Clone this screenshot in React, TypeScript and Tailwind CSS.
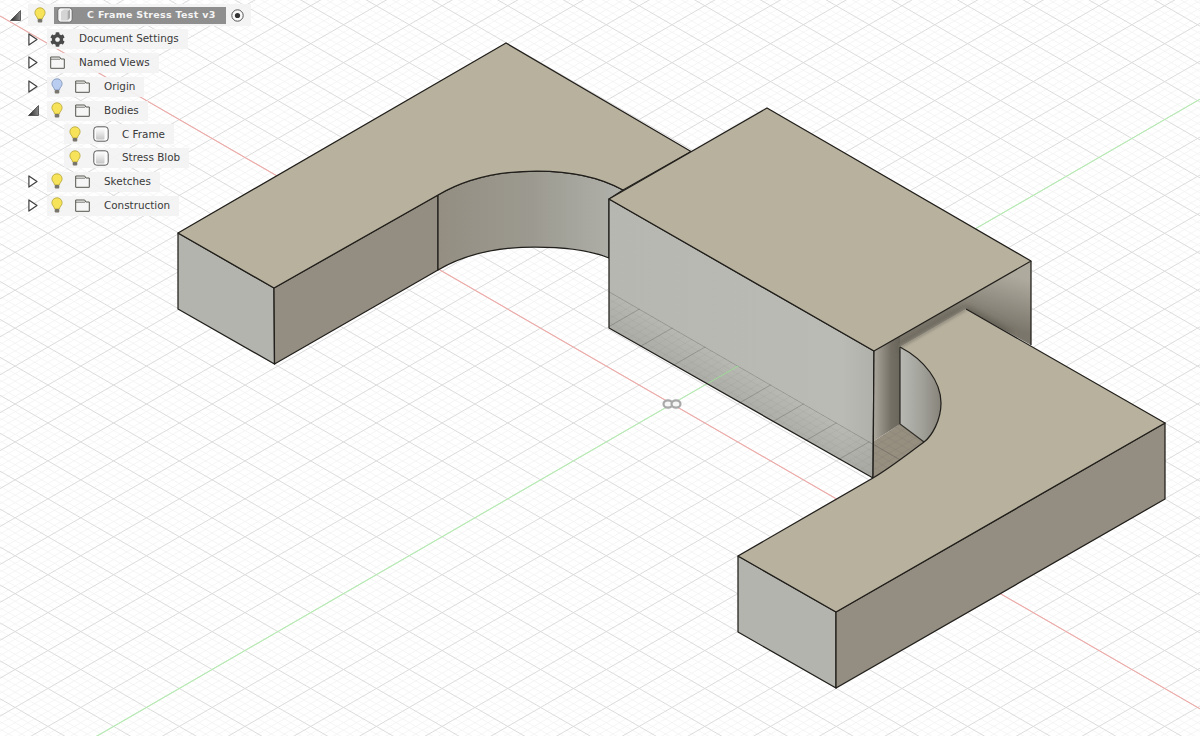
import React from 'react';
import { FaCog } from 'react-icons/fa';

const OX = 672;
const OY = 404;
const SLOPE = 0.5774;
const STEP = 37.93 / 5;

// iso grid lines, every fifth one is a major line
const GRID: { y0: number; y1: number; major: boolean }[] = [];
for (let k = -200; k <= 200; k++) {
  const major = k % 5 === 0;
  const a = OY - SLOPE * OX + k * STEP;
  GRID.push({ y0: a, y1: a + SLOPE * 1200, major });
  const b = OY + SLOPE * OX + k * STEP;
  GRID.push({ y0: b, y1: b - SLOPE * 1200, major });
}

const redLine = { y0: OY - SLOPE * OX, y1: OY - SLOPE * OX + SLOPE * 1200 };
const greenLine = { y0: OY + SLOPE * OX, y1: OY + SLOPE * OX - SLOPE * 1200 };

const EDGE = '#211f1b';
const EDGE_W = 1.25;

const GridLines = ({ minor, major }: { minor: string; major: string }) => (
  <>
    {GRID.filter(l => !l.major).map((l, i) => (
      <line key={i} x1={0} y1={l.y0} x2={1200} y2={l.y1} stroke={minor} strokeWidth={0.8} />
    ))}
    {GRID.filter(l => l.major).map((l, i) => (
      <line key={i} x1={0} y1={l.y0} x2={1200} y2={l.y1} stroke={major} strokeWidth={1} />
    ))}
  </>
);

const Viewport = () => (
  <svg className="absolute inset-0" width={1200} height={736} viewBox="0 0 1200 736">
    <defs>
      <linearGradient id="arcWall" x1="438" y1="0" x2="625" y2="0" gradientUnits="userSpaceOnUse">
        <stop offset="0" stopColor="#948e82" />
        <stop offset="0.5" stopColor="#9c9a90" />
        <stop offset="1" stopColor="#b1b2ac" />
      </linearGradient>
      <linearGradient id="frontFace" x1="609" y1="0" x2="873" y2="0" gradientUnits="userSpaceOnUse">
        <stop offset="0" stopColor="#b6b7b1" />
        <stop offset="0.88" stopColor="#babbb5" />
        <stop offset="1" stopColor="#b1b1ab" />
      </linearGradient>
      <linearGradient id="bandShade" x1="745" y1="368" x2="727" y2="400" gradientUnits="userSpaceOnUse">
        <stop offset="0" stopColor="#77776f" stopOpacity="0" />
        <stop offset="1" stopColor="#77776f" stopOpacity="0.2" />
      </linearGradient>
      <linearGradient id="innerLeft" x1="874" y1="0" x2="900" y2="0" gradientUnits="userSpaceOnUse">
        <stop offset="0" stopColor="#aaa69b" />
        <stop offset="0.65" stopColor="#757066" />
        <stop offset="1" stopColor="#6a665c" />
      </linearGradient>
      <linearGradient id="innerBack" x1="1000" y1="272" x2="986" y2="322" gradientUnits="userSpaceOnUse">
        <stop offset="0" stopColor="#aeaa9e" />
        <stop offset="1" stopColor="#7b766b" />
      </linearGradient>
      <linearGradient id="curveWall" x1="900" y1="0" x2="941" y2="0" gradientUnits="userSpaceOnUse">
        <stop offset="0" stopColor="#b8b9b3" />
        <stop offset="0.5" stopColor="#a3a39c" />
        <stop offset="1" stopColor="#87837a" />
      </linearGradient>
      <filter id="soft" x="-30%" y="-30%" width="160%" height="160%">
        <feGaussianBlur stdDeviation="4" />
      </filter>
      <filter id="softer" x="-10%" y="-10%" width="120%" height="120%">
        <feGaussianBlur stdDeviation="1.5" />
      </filter>
      <clipPath id="band">
        <polygon points="609,291 609,328 873,478 873,443.500" />
      </clipPath>
      <clipPath id="floor">
        <path d="M874,441 L900,424 L924,442 C905,456 890,468 873,478 Z" />
      </clipPath>
      <clipPath id="innerClip">
        <polygon points="874,351 1031,261 1031,345 966,309 900,347 900,424 874,441" />
      </clipPath>
    </defs>

    <GridLines minor="#f2f2f2" major="#dcdcdc" />
    <line x1={0} y1={redLine.y0} x2={1200} y2={redLine.y1} stroke="#efa9a6" strokeWidth={1.1} />
    <line x1={0} y1={greenLine.y0} x2={1200} y2={greenLine.y1} stroke="#b4ecb0" strokeWidth={1.1} />

    {/* origin marker */}
    <ellipse cx={668} cy={404} rx={4.5} ry={3.6} fill="#f6f6f6" stroke="#a8a8a8" strokeWidth={2.2} />
    <ellipse cx={676} cy={404} rx={4.5} ry={3.6} fill="#f6f6f6" stroke="#a8a8a8" strokeWidth={2.2} />

    {/* left leg */}
    <polygon points="178,233 274,288 274.5,364 178,309" fill="#b3b4ae" stroke={EDGE} strokeWidth={EDGE_W} strokeLinejoin="round" />
    <polygon points="274,288 438,195 438,270 274.5,364" fill="#948d81" stroke={EDGE} strokeWidth={EDGE_W} strokeLinejoin="round" />
    <path d="M438,195 C465,179 500,171 537,171 C570,171 600,177 623,190 L609,199 L609,258 C590,250 565,247 535,247 C500,247 465,254 438,270 Z" fill="url(#arcWall)" stroke={EDGE} strokeWidth={EDGE_W} />
    <path d="M506,43 L178,233 L274,288 L438,195 C465,179 500,171 537,171 C570,171 600,177 623,190 L691,151.500 Z" fill="#b8b19e" stroke={EDGE} strokeWidth={EDGE_W} strokeLinejoin="round" />

    {/* middle block */}
    <polygon points="609,199 874,351 873,478 609,328" fill="url(#frontFace)" />
    <g clipPath="url(#band)">
      <polygon points="609,291 609,328 873,478 873,443.500" fill="url(#bandShade)" />
      <GridLines minor="rgba(90,90,85,0.07)" major="rgba(70,70,65,0.28)" />
      <line x1={672} y1={404} x2={745} y2={362} stroke="#a6d8a0" strokeWidth={1.1} />
    </g>
    <polygon points="609,199 874,351 873,478 609,328" fill="none" stroke={EDGE} strokeWidth={EDGE_W} strokeLinejoin="round" />

    {/* opening under the block */}
    <polygon points="874,351 900,336 900,424 874,441" fill="url(#innerLeft)" />
    <polygon points="900,336 1031,261 1031,345 966,309 900,347" fill="url(#innerBack)" />
    <g clipPath="url(#innerClip)">
      <path d="M900,349 L966,311 L1010,336" fill="none" stroke="#5a564c" strokeWidth={7} filter="url(#soft)" />
    </g>
    <path d="M874,441 L900,424 L924,442 C905,456 890,468 873,478 Z" fill="#968f80" />
    <g clipPath="url(#floor)">
      <GridLines minor="rgba(60,58,50,0.07)" major="rgba(50,48,42,0.26)" />
    </g>
    <path d="M900,347 C925,360 941,382 941,403 C941,420 932,436 924,442 L900,424 Z" fill="url(#curveWall)" />
    <path d="M900,347 L900,424 L924,442" fill="none" stroke={EDGE} strokeWidth={EDGE_W} strokeOpacity={0.9} />
    <line x1={1031} y1={261} x2={1031} y2={345} stroke={EDGE} strokeWidth={EDGE_W} />
    <line x1={874} y1={351} x2={873} y2={478} stroke={EDGE} strokeWidth={EDGE_W} />

    {/* block top */}
    <polygon points="609,199 767,108 1031,261 874,351" fill="#b8b19e" stroke={EDGE} strokeWidth={EDGE_W} strokeLinejoin="round" />

    {/* right leg */}
    <polygon points="738,556 836,612 836,688 738,632" fill="#b3b4ae" stroke={EDGE} strokeWidth={EDGE_W} strokeLinejoin="round" />
    <polygon points="836,612 1165,423 1165,499 836,688" fill="#948d81" stroke={EDGE} strokeWidth={EDGE_W} strokeLinejoin="round" />
    <path d="M738,556 L836,612 L1165,423 L966,309 L900,347 C925,360 941,382 941,403 C941,420 932,436 924,442 C905,456 890,468 873,478 Z" fill="#b8b19e" />
    {/* the edge by the shadow stays soft, the rest is a hard line */}
    <path d="M900,347 L966,309" fill="none" stroke="#8d887b" strokeWidth={3} filter="url(#softer)" />
    <path d="M966,309 L1165,423 L836,612 L738,556 L873,478 C890,468 905,456 924,442 C932,436 941,420 941,403 C941,382 925,360 900,347" fill="none" stroke={EDGE} strokeWidth={EDGE_W} strokeLinejoin="round" />
  </svg>
);

const Bulb = ({ off }: { off?: boolean }) => (
  <svg width={12} height={17} viewBox="0 0 12 17" className="shrink-0">
    <path
      d="M6 .8C3 .8.9 3 .9 5.7c0 2 1.2 3.1 2 4.3.4.6.5 1.200.6 1.900h5c.1-.7.2-1.300.6-1.900.8-1.200 2-2.300 2-4.300C11.100 3 9 .8 6 .8Z"
      fill={off ? '#b9cdf0' : '#f7e35a'}
      stroke={off ? '#7f93b8' : '#b5a63a'}
      strokeWidth={0.8}
    />
    <rect x={3.700} y={12} width={4.600} height={3.600} rx={1} fill="#77756c" />
  </svg>
);

const Folder = () => (
  <svg width={15} height={13} viewBox="0 0 15 13" className="shrink-0">
    <path d="M.7 1h9l1.200 2h3.400v9.300H.7Z" fill="#f6f6f6" stroke="#55554f" strokeWidth={1} strokeLinejoin="round" />
    <line x1={.7} y1={3.200} x2={10} y2={3.200} stroke="#55554f" strokeWidth={0.8} />
  </svg>
);

const BodyIcon = ({ id }: { id: string }) => (
  <svg width={16} height={16} viewBox="0 0 16 16" className="shrink-0">
    <defs>
      <linearGradient id={id} x1="0" y1="0" x2="0" y2="1">
        <stop offset="0" stopColor="#fafafa" />
        <stop offset="1" stopColor="#c6c6c6" />
      </linearGradient>
    </defs>
    <rect x={.8} y={.8} width={14.400} height={14.400} rx={3} fill="#fbfbfb" stroke="#5c5c5c" strokeWidth={1} />
    <rect x={3} y={3} width={8.500} height={10.500} rx={1} fill={`url(#${id})`} />
  </svg>
);

const RootIcon = () => (
  <svg width={16} height={16} viewBox="0 0 16 16" className="shrink-0">
    <rect x={.8} y={.8} width={14.400} height={14.400} rx={3} fill="#f4f4f4" stroke="#6b6b6b" strokeWidth={1} />
    <path d="M4 4.500 7 2.500h6l-2.500 2v9H4Z" fill="#d4d4d4" />
    <path d="M10.500 4.500 13 2.500v8.500l-2.500 2.500Z" fill="#a9a9a9" />
  </svg>
);

const Closed = () => (
  <svg width={10} height={13} viewBox="0 0 10 13" className="shrink-0">
    <path d="M.9 .9 9 6.500.9 12.100Z" fill="#fff" stroke="#3f3f3f" strokeWidth={1.200} strokeLinejoin="round" />
  </svg>
);

const Open = () => (
  <svg width={11} height={11} viewBox="0 0 11 11" className="shrink-0">
    <defs>
      <linearGradient id="openTri" x1="0" y1="0" x2="1" y2="0">
        <stop offset="0" stopColor="#222" />
        <stop offset="1" stopColor="#8a8a8a" />
      </linearGradient>
    </defs>
    <path d="M.5 10.500 10.500 .5v10Z" fill="url(#openTri)" stroke="#333" strokeWidth={0.7} />
  </svg>
);

const rowClass = 'flex items-center h-[23.8px]';
const chipClass = 'flex items-center h-[20px] bg-[#f3f3f3]/90 pr-[9px]';
const labelClass = 'text-[10.4px] text-[#3a3a3a] whitespace-nowrap';

const FOLDERS_TOP = [
  { label: 'Origin', off: true, open: false },
  { label: 'Bodies', off: false, open: true },
];
const BODIES = ['C Frame', 'Stress Blob'];
const FOLDERS_BOTTOM = ['Sketches', 'Construction'];

const FolderRow = ({ label, off, open }: { label: string; off?: boolean; open?: boolean }) => (
  <div className={`${rowClass} pl-[28px]`}>
    <div className="w-[10px] flex justify-center">{open ? <Open /> : <Closed />}</div>
    <div className={`${chipClass} ml-[9px] pl-1`}>
      <Bulb off={off} />
      <div className="ml-3"><Folder /></div>
      <span className={`${labelClass} ml-[14px]`}>{label}</span>
    </div>
  </div>
);

const Browser = () => (
  <div
    className="absolute left-0 top-[3.5px] flex flex-col"
    style={{ fontFamily: '"DejaVu Sans", sans-serif' }}
  >
    <div className={`${rowClass} pl-[10px]`}>
      <Open />
      <div className="flex items-center h-[22px] ml-[7px] pl-[6px] pr-[7px] bg-[#f3f3f3]/90">
        <Bulb />
        <div className="flex items-center w-[172px] h-[17px] ml-2 pl-[3px] bg-[#8f8f8f]">
          <RootIcon />
          <span className="ml-[14px] text-[9.5px] font-bold tracking-[0.3px] text-[#f4f4f4] whitespace-nowrap">
            C Frame Stress Test v3
          </span>
        </div>
        <svg width={13} height={13} viewBox="0 0 13 13" className="ml-[5px]">
          <circle cx={6.500} cy={6.500} r={5.700} fill="#fafafa" stroke="#555" strokeWidth={1} />
          <circle cx={6.500} cy={6.500} r={2.600} fill="#333" />
        </svg>
      </div>
    </div>

    <div className={`${rowClass} pl-[28px]`}>
      <div className="w-[10px] flex justify-center"><Closed /></div>
      <div className={`${chipClass} ml-[9px] pl-[3px]`}>
        <FaCog className="w-[15px] h-[15px] text-[#4a4a4a]" />
        <span className={`${labelClass} ml-[14px]`}>Document Settings</span>
      </div>
    </div>

    <div className={`${rowClass} pl-[28px]`}>
      <div className="w-[10px] flex justify-center"><Closed /></div>
      <div className={`${chipClass} ml-[9px] pl-[3px]`}>
        <Folder />
        <span className={`${labelClass} ml-[14px]`}>Named Views</span>
      </div>
    </div>

    {FOLDERS_TOP.map(f => <FolderRow key={f.label} {...f} />)}

    {BODIES.map((name, i) => (
      <div key={name} className={`${rowClass} pl-[64px]`}>
        <div className={`${chipClass} pl-[5px]`}>
          <Bulb />
          <div className="ml-3"><BodyIcon id={`bodyFill${i}`} /></div>
          <span className={`${labelClass} ml-[13px]`}>{name}</span>
        </div>
      </div>
    ))}

    {FOLDERS_BOTTOM.map(label => <FolderRow key={label} label={label} />)}
  </div>
);

export default function App() {
  return (
    <div className="relative w-[1200px] h-[736px] overflow-hidden bg-white">
      <Viewport />
      <Browser />
    </div>
  );
}
